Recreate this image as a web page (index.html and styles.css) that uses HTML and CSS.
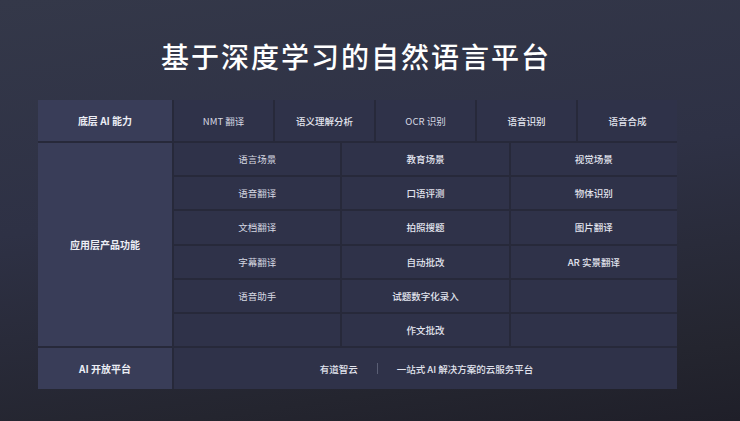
FILE: index.html
```html
<!DOCTYPE html>
<html lang="zh-CN">
<head>
<meta charset="utf-8">
<title>基于深度学习的自然语言平台</title>
<link rel="stylesheet" href="styles.css">
</head>
<body>
<div class="page">
  <h1 class="title">基于深度学习的自然语言平台</h1>
  <div class="table">
    <div class="label">底层 AI 能力</div>
    <div class="row-top">
      <div class="cell c1">NMT 翻译</div>
      <div class="cell">语义理解分析</div>
      <div class="cell c1">OCR 识别</div>
      <div class="cell">语音识别</div>
      <div class="cell">语音合成</div>
    </div>
    <div class="label">应用层产品功能</div>
    <div class="row-mid">
      <div class="cell c1">语言场景</div>
      <div class="cell">教育场景</div>
      <div class="cell">视觉场景</div>
      <div class="cell c1">语音翻译</div>
      <div class="cell">口语评测</div>
      <div class="cell">物体识别</div>
      <div class="cell c1">文档翻译</div>
      <div class="cell">拍照搜题</div>
      <div class="cell">图片翻译</div>
      <div class="cell c1">字幕翻译</div>
      <div class="cell">自动批改</div>
      <div class="cell">AR 实景翻译</div>
      <div class="cell c1">语音助手</div>
      <div class="cell">试题数字化录入</div>
      <div class="cell"></div>
      <div class="cell c1"></div>
      <div class="cell">作文批改</div>
      <div class="cell"></div>
    </div>
    <div class="label">AI 开放平台</div>
    <div class="cell platform">
      <span>有道智云</span>
      <span class="divider"></span>
      <span>一站式 AI 解决方案的云服务平台</span>
    </div>
  </div>
</div>
</body>
</html>
```

FILE: styles.css
```css
html, body {
  margin: 0;
  padding: 0;
}
body {
  width: 740px;
  height: 421px;
  overflow: hidden;
  background: linear-gradient(172deg, #343849 0%, #2e3145 45%, #24252f 85%, #1f1f29 100%);
  font-family: "Noto Sans CJK SC", "Noto Sans", sans-serif;
}
.page {
  padding-top: 42px;
}
.title {
  margin: 0 0 30px 161px;
  height: 28px;
  line-height: 28px;
  font-size: 28px;
  font-weight: 500;
  letter-spacing: 2px;
  color: #ffffff;
  white-space: nowrap;
}
.table {
  margin-left: 38px;
  width: 639px;
  display: grid;
  grid-template-columns: 134px 1fr;
  grid-template-rows: 41px 203px 41px;
  gap: 2px;
  background: #27293a;
}
.label {
  background: #393d58;
  color: #eceef5;
  font-size: 10px;
  font-weight: 700;
  display: flex;
  align-items: center;
  justify-content: center;
}
.row-top {
  display: grid;
  grid-template-columns: repeat(5, 1fr);
  gap: 2px;
}
.row-mid {
  display: grid;
  grid-template-columns: repeat(3, 1fr);
  grid-template-rows: repeat(6, 1fr);
  gap: 2px;
}
.cell {
  background: #2f3249;
  color: #e2e4ee;
  font-size: 9.5px;
  font-weight: 500;
  display: flex;
  align-items: center;
  justify-content: center;
}
.c1 {
  color: #d6d8e2;
  font-weight: 400;
}
.platform {
  gap: 19px;
  padding-left: 2px;
}
.divider {
  width: 1px;
  height: 11px;
  background: #5a5e74;
}
```
